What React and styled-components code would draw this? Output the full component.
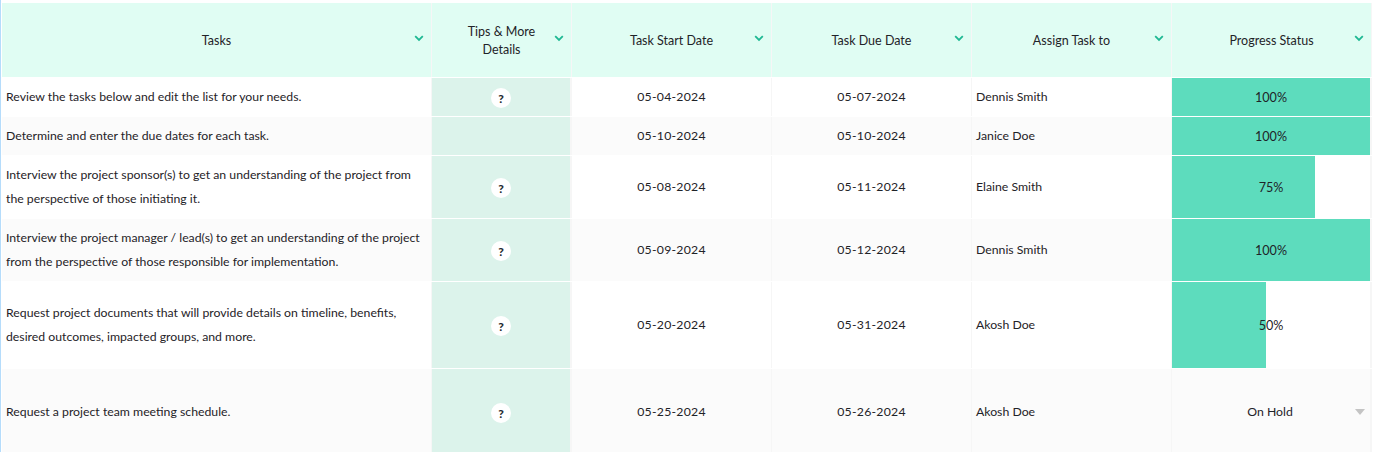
import React from 'react'
import styled, { createGlobalStyle } from 'styled-components'

const GlobalStyle = createGlobalStyle`
  html, body {
    margin: 0;
    padding: 0;
    background: #fff;
    overflow: hidden;
  }
`

const Sheet = styled.div`
  width: 1379px;
  height: 452px;
  overflow: hidden;
  box-sizing: border-box;
  padding: 3px 0 0 2px;
  font-family: Lato, "Noto Sans", sans-serif;
  font-size: 12.28px;
  color: #1f2328;
  position: relative;
  &::before {
    content: '';
    position: absolute;
    left: 0;
    top: 0;
    bottom: 0;
    width: 1px;
    background: #b5dcfb;
  }
`

const Row = styled.div`
  display: grid;
  grid-template-columns: 429px 139px 199px 199px 199px 199px;
  column-gap: 1px;
  height: ${p => p.$h}px;
  margin-bottom: 1px;
  width: 1370px;
  background: #f6f6f6;
`

const HeadCell = styled.div`
  position: relative;
  display: flex;
  align-items: center;
  justify-content: center;
  box-sizing: border-box;
  text-align: center;
  white-space: nowrap;
  line-height: 18px;
  font-size: 12.5px;
  background: #e0fdf3;
  padding: 1px 36px 0;
`

const Chevron = styled.svg`
  position: absolute;
  right: 7px;
  top: 32px;
  width: 10px;
  height: 7px;
`

const Cell = styled.div`
  display: flex;
  align-items: center;
  box-sizing: border-box;
  padding: 0 4px;
  line-height: 24.5px;
  background: ${p => (p.$alt ? '#fbfbfb' : '#fff')};
  justify-content: ${p => (p.$center ? 'center' : 'flex-start')};
`

const DateText = styled.span`
  letter-spacing: 0.25px;
`

const TipCell = styled.div`
  display: flex;
  align-items: center;
  justify-content: center;
  background: #dcf3eb;
  margin-right: 1px;
`

const TipBadge = styled.span`
  width: 20px;
  height: 20px;
  margin-top: 2px;
  border-radius: 50%;
  background: #fff;
  display: flex;
  align-items: center;
  justify-content: center;
  font-size: 12px;
  font-weight: 900;
  color: #262b30;
`

const ProgressCell = styled.div`
  position: relative;
  display: flex;
  align-items: center;
  justify-content: center;
  line-height: 24.5px;
  margin-right: 1px;
  background: ${p => (p.$alt ? '#fbfbfb' : '#fff')};
`

const ProgressFill = styled.div`
  position: absolute;
  left: 0;
  top: 0;
  bottom: 0;
  background: #5ddcbd;
`

const ProgressLabel = styled.span`
  position: relative;
  padding-top: 2px;
  font-size: 12.6px;
`

const StatusLabel = styled.span`
  margin-left: -2px;
`

const StatusCaret = styled.span`
  position: absolute;
  right: 5px;
  top: 50%;
  margin-top: -3px;
  width: 0;
  height: 0;
  border-left: 5px solid transparent;
  border-right: 5px solid transparent;
  border-top: 6px solid #c4c4c4;
`

const headers = [
  'Tasks',
  <>Tips &amp; More<br />Details</>,
  'Task Start Date',
  'Task Due Date',
  'Assign Task to',
  'Progress Status',
]

const rows = [
  { h: 38, task: 'Review the tasks below and edit the list for your needs.', tip: true, start: '05-04-2024', due: '05-07-2024', who: 'Dennis Smith', pct: 100, fill: 100 },
  { h: 38, alt: true, task: 'Determine and enter the due dates for each task.', tip: false, start: '05-10-2024', due: '05-10-2024', who: 'Janice Doe', pct: 100, fill: 100 },
  { h: 62, task: <>Interview the project sponsor(s) to get an understanding of the project from<br />the perspective of those initiating it.</>, tip: true, start: '05-08-2024', due: '05-11-2024', who: 'Elaine Smith', pct: 75, fill: 72.2 },
  { h: 62, alt: true, task: <>Interview the project manager / lead(s) to get an understanding of the project<br />from the perspective of those responsible for implementation.</>, tip: true, start: '05-09-2024', due: '05-12-2024', who: 'Dennis Smith', pct: 100, fill: 100 },
  { h: 86, task: <>Request project documents that will provide details on timeline, benefits,<br />desired outcomes, impacted groups, and more.</>, tip: true, start: '05-20-2024', due: '05-31-2024', who: 'Akosh Doe', pct: 50, fill: 47.5 },
  { h: 86, alt: true, task: 'Request a project team meeting schedule.', tip: true, start: '05-25-2024', due: '05-26-2024', who: 'Akosh Doe', status: 'On Hold' },
]

const App = () => (
  <>
    <GlobalStyle />
    <Sheet>
      <Row $h={74}>
        {headers.map((label, i) => (
          <HeadCell key={i}>
            <div>{label}</div>
            <Chevron viewBox="0 0 10 7">
              <path d="M1.2 1.2 5 5 8.8 1.2" fill="none" stroke="#1fb893" strokeWidth="1.8" />
            </Chevron>
          </HeadCell>
        ))}
      </Row>
      {rows.map((r, i) => (
        <Row key={i} $h={r.h}>
          <Cell $alt={r.alt}><div>{r.task}</div></Cell>
          <TipCell>{r.tip && <TipBadge>?</TipBadge>}</TipCell>
          <Cell $alt={r.alt} $center><DateText>{r.start}</DateText></Cell>
          <Cell $alt={r.alt} $center><DateText>{r.due}</DateText></Cell>
          <Cell $alt={r.alt}>{r.who}</Cell>
          <ProgressCell $alt={r.alt}>
            {r.status ? (
              <>
                <StatusLabel>{r.status}</StatusLabel>
                <StatusCaret />
              </>
            ) : (
              <>
                <ProgressFill style={{ width: `${r.fill}%` }} />
                <ProgressLabel>{r.pct}%</ProgressLabel>
              </>
            )}
          </ProgressCell>
        </Row>
      ))}
    </Sheet>
  </>
)

export default App
